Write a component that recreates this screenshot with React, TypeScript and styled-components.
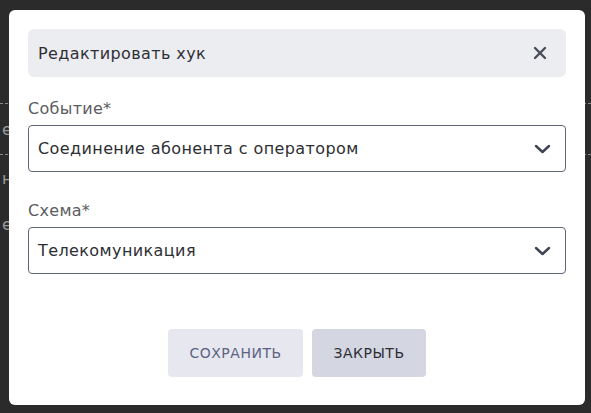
import React from "react";
import styled, { createGlobalStyle } from "styled-components";

const GlobalStyle = createGlobalStyle`
  html, body {
    margin: 0;
    padding: 0;
    background: #2b2b2b;
    font-family: "DejaVu Sans", "Open Sans", sans-serif;
  }
  * {
    box-sizing: border-box;
  }
`;

const Page = styled.div`
  position: relative;
  width: 591px;
  height: 413px;
  overflow: hidden;
  background: #2b2b2b;
`;

const Backdrop = styled.div`
  position: absolute;
  inset: 0;
  display: flex;
  flex-direction: column;
`;

const BackRow = styled.div<{ $line?: boolean }>`
  display: flex;
  align-items: center;
  padding-left: 2px;
  color: #9b9b9b;
  font-size: 16px;
  border-bottom: 1px dashed ${(p) => (p.$line ? "#8a8a8a" : "transparent")};
`;

const Overlay = styled.div`
  position: absolute;
  inset: 0;
  padding: 10px 6px 8px 9px;
  display: flex;
`;

const Modal = styled.div`
  width: 576px;
  height: 395px;
  background: #ffffff;
  border-radius: 6px;
  padding: 19px 19px 28px;
  display: flex;
  flex-direction: column;
`;

const Header = styled.div`
  height: 48px;
  border-radius: 6px;
  background: #ecedf1;
  display: flex;
  align-items: center;
  justify-content: space-between;
  padding: 0 14px 0 10px;
`;

const Title = styled.h2`
  margin: 0;
  font-size: 16px;
  font-weight: 400;
  letter-spacing: 0.4px;
  color: #2f3035;
`;

const CloseButton = styled.button`
  width: 24px;
  height: 24px;
  border: none;
  padding: 0;
  background: transparent;
  display: flex;
  align-items: center;
  justify-content: center;
  cursor: pointer;
`;

const Field = styled.div<{ $first?: boolean }>`
  display: flex;
  flex-direction: column;
  margin-top: ${(p) => (p.$first ? 22 : 29)}px;
`;

const Label = styled.label`
  height: 20px;
  line-height: 20px;
  font-size: 16px;
  letter-spacing: 0.3px;
  color: #5c5c60;
  margin-bottom: 6px;
`;

const Select = styled.div`
  height: 47px;
  border: 1px solid #5f6679;
  border-radius: 4px;
  display: flex;
  align-items: center;
  justify-content: space-between;
  padding: 0 14px 0 9px;
  font-size: 16px;
  letter-spacing: 0.4px;
  color: #2d2e33;
  cursor: pointer;
`;

const Actions = styled.div`
  margin-top: auto;
  display: flex;
  justify-content: center;
  gap: 9px;
`;

const Button = styled.button<{ $variant: "save" | "close" }>`
  height: 48px;
  padding: 0 21.5px;
  border: none;
  border-radius: 4px;
  font-family: inherit;
  font-size: 14px;
  font-weight: 400;
  text-transform: uppercase;
  letter-spacing: 0.5px;
  background: ${(p) => (p.$variant === "save" ? "#e7e8ef" : "#d4d6e2")};
  color: ${(p) => (p.$variant === "save" ? "#5b6282" : "#2c2d33")};
  cursor: pointer;
`;

const CloseIcon = () => (
  <svg width="14" height="14" viewBox="0 0 14 14">
    <path
      d="M2 2 L12 12 M12 2 L2 12"
      stroke="#4a4d57"
      strokeWidth="2.4"
      strokeLinecap="round"
    />
  </svg>
);

const Chevron = () => (
  <svg width="17" height="10" viewBox="0 0 17 10">
    <path
      d="M2 2 L8.5 8 L15 2"
      stroke="#3d4454"
      strokeWidth="2.4"
      fill="none"
      strokeLinecap="round"
      strokeLinejoin="round"
    />
  </svg>
);

export default function App() {
  return (
    <>
      <GlobalStyle />
      <Page>
        <Backdrop>
          <BackRow style={{ height: 104 }} $line />
          <BackRow style={{ height: 51 }} $line>
            ет
          </BackRow>
          <BackRow style={{ height: 48 }}>не</BackRow>
          <BackRow style={{ height: 44 }}>ем</BackRow>
        </Backdrop>
        <Overlay>
          <Modal>
            <Header>
              <Title>Редактировать хук</Title>
              <CloseButton aria-label="Закрыть">
                <CloseIcon />
              </CloseButton>
            </Header>
            <Field $first>
              <Label>Событие*</Label>
              <Select>
                <span>Соединение абонента с оператором</span>
                <Chevron />
              </Select>
            </Field>
            <Field>
              <Label>Схема*</Label>
              <Select>
                <span>Телекомуникация</span>
                <Chevron />
              </Select>
            </Field>
            <Actions>
              <Button $variant="save">Сохранить</Button>
              <Button $variant="close">Закрыть</Button>
            </Actions>
          </Modal>
        </Overlay>
      </Page>
    </>
  );
}
